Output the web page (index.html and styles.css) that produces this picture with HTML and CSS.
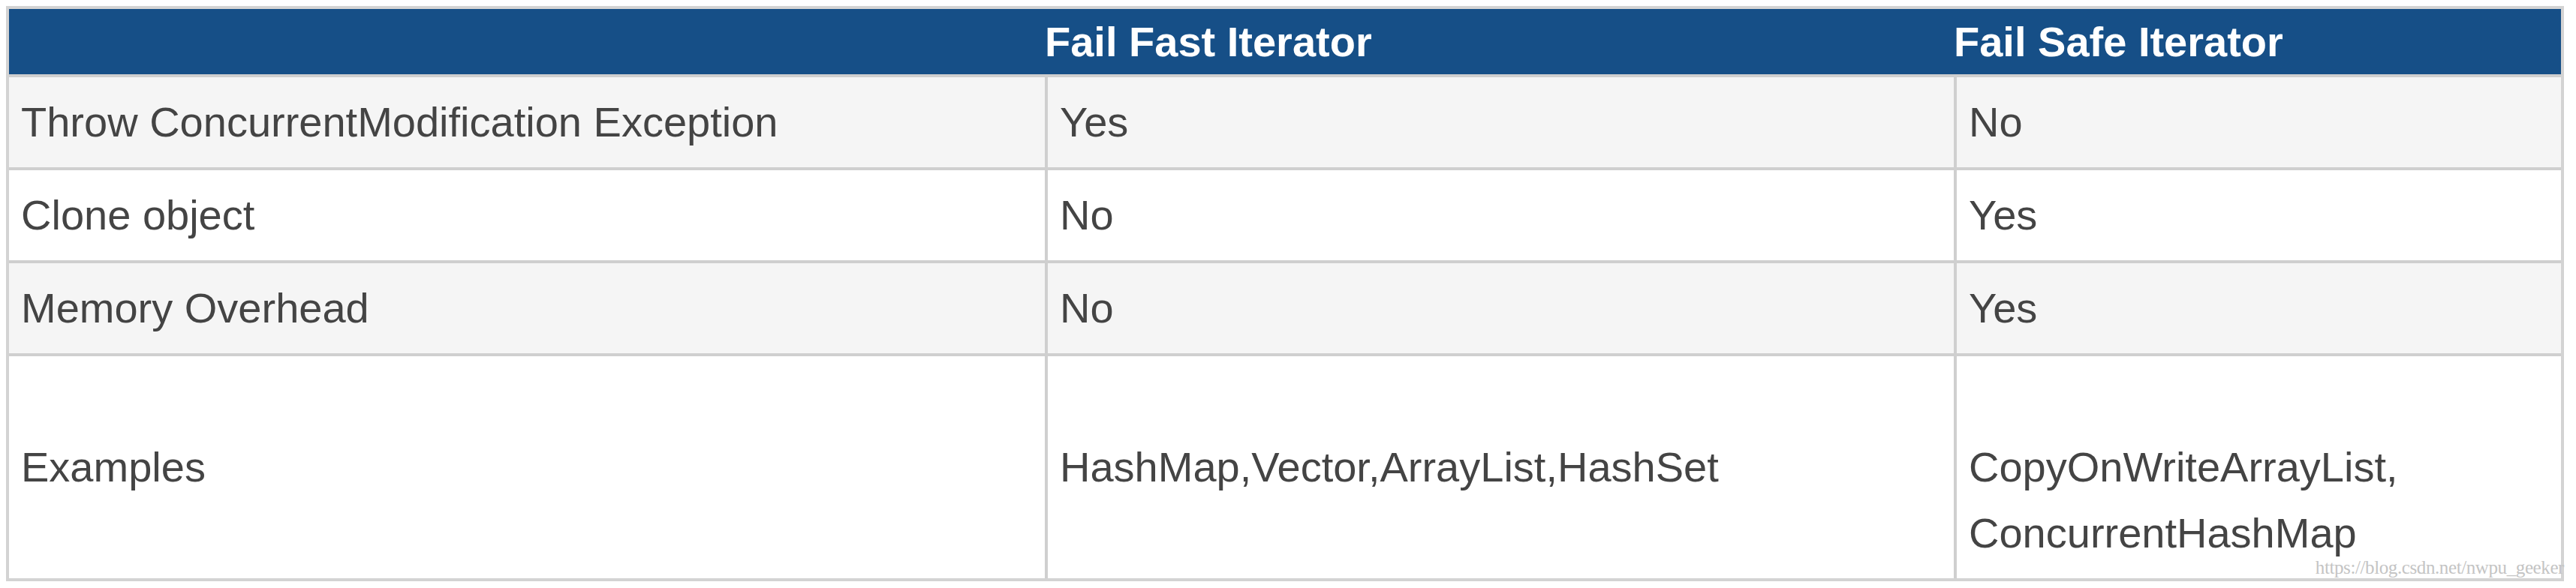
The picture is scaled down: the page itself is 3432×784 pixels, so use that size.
FILE: index.html
```html
<!DOCTYPE html>
<html lang="en">
<head>
<meta charset="utf-8">
<title>Fail Fast vs Fail Safe Iterator</title>
<link rel="stylesheet" href="styles.css">
</head>
<body>
<div class="figure">
  <table class="compare">
    <colgroup>
      <col class="col-feature">
      <col class="col-fast">
      <col class="col-safe">
    </colgroup>
    <thead>
      <tr>
        <th></th>
        <th>Fail Fast Iterator</th>
        <th>Fail Safe Iterator</th>
      </tr>
    </thead>
    <tbody>
      <tr class="shaded">
        <td>Throw ConcurrentModification Exception</td>
        <td>Yes</td>
        <td>No</td>
      </tr>
      <tr>
        <td>Clone object</td>
        <td>No</td>
        <td>Yes</td>
      </tr>
      <tr class="shaded">
        <td>Memory Overhead</td>
        <td>No</td>
        <td>Yes</td>
      </tr>
      <tr class="last">
        <td>Examples</td>
        <td>HashMap,Vector,ArrayList,HashSet</td>
        <td class="multi"><br>CopyOnWriteArrayList,<br>ConcurrentHashMap</td>
      </tr>
    </tbody>
  </table>
  <span class="watermark">https://blog.csdn.net/nwpu_geeker</span>
</div>
</body>
</html>
```

FILE: styles.css
```css
html, body {
  margin: 0;
  padding: 0;
  background: #ffffff;
}

body {
  padding: 8px;
  font-family: "Liberation Sans", Arial, Helvetica, sans-serif;
  color: #444444;
}

.figure {
  position: relative;
  width: 3408px;
}

.compare {
  width: 3408px;
  table-layout: fixed;
  border-collapse: separate;
  border-spacing: 0;
  border: 4px solid #d3d3d3;
}

.col-feature { width: 1380px; }
.col-fast { width: 1211px; }
.col-safe { width: 809px; }

.compare th {
  height: 87px;
  padding: 0;
  background: #164f87;
  color: #ffffff;
  font-size: 56px;
  font-weight: bold;
  text-align: left;
  vertical-align: middle;
  border-bottom: 4px solid #cfcfcf;
}

.compare td {
  padding: 16px 16px;
  font-size: 56px;
  line-height: 88px;
  vertical-align: middle;
  background: #ffffff;
  border-bottom: 4px solid #cfcfcf;
}

.compare td + td {
  border-left: 4px solid #cfcfcf;
}

.compare tr.shaded td {
  background: #f5f5f5;
}

.compare tr.last td {
  border-bottom: 0;
}

.watermark {
  position: absolute;
  right: 0;
  bottom: 6px;
  font-family: "Liberation Serif", "DejaVu Serif", serif;
  font-size: 25px;
  line-height: 25px;
  color: #c4c4c4;
  letter-spacing: -0.4px;
}
```
